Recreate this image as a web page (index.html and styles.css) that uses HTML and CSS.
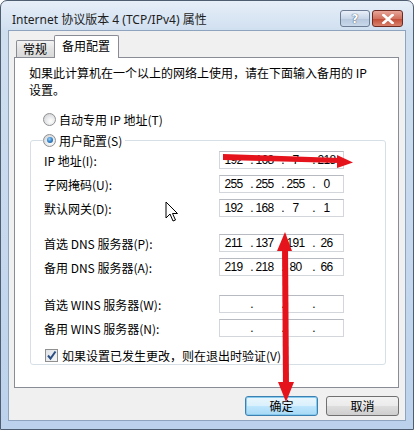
FILE: index.html
```html
<!DOCTYPE html>
<html lang="zh-CN">
<head>
    <meta charset="UTF-8">
    <title>Internet 协议版本 4 (TCP/IPv4) 属性</title>
    <link rel="stylesheet" href="styles.css">
</head>
<body>
    <div class="window">
        <div class="titlebar">
            <span class="title">Internet 协议版本 4 (TCP/IPv4) 属性</span>
            <div class="caption-btns">
                <span class="cap-btn help">?</span>
                <span class="cap-btn close">
                    <svg width="12" height="10" viewBox="0 0 12 10"><path d="M1.5 1 L10.5 9 M10.5 1 L1.5 9" stroke="#fff" stroke-width="2.6" stroke-linecap="square"/></svg>
                </span>
            </div>
        </div>

        <div class="client">
            <div class="tabs">
                <span class="tab">常规</span>
                <span class="tab active">备用配置</span>
            </div>
            <div class="panel">
                <p class="intro">如果此计算机在一个以上的网络上使用，请在下面输入备用的 IP<br>设置。</p>
                <div class="radio-row auto">
                    <span class="radio"></span>自动专用 IP 地址(T)
                </div>
                <fieldset class="group">
                    <legend class="radio-row">
                        <span class="radio checked"></span>用户配置(S)
                    </legend>

                    <div class="rows">
                        <div class="row">
                            <span class="lbl">IP 地址(I):</span>
                            <div class="ipbox"><span class="n">192</span><span class="d">.</span><span class="n">168</span><span class="d">.</span><span class="n">7</span><span class="d">.</span><span class="n">218</span></div>
                        </div>
                        <div class="row">
                            <span class="lbl">子网掩码(U):</span>
                            <div class="ipbox"><span class="n">255</span><span class="d">.</span><span class="n">255</span><span class="d">.</span><span class="n">255</span><span class="d">.</span><span class="n">0</span></div>
                        </div>
                        <div class="row">
                            <span class="lbl">默认网关(D):</span>
                            <div class="ipbox"><span class="n">192</span><span class="d">.</span><span class="n">168</span><span class="d">.</span><span class="n">7</span><span class="d">.</span><span class="n">1</span></div>
                        </div>
                    </div>

                    <div class="rows">
                        <div class="row">
                            <span class="lbl">首选 DNS 服务器(P):</span>
                            <div class="ipbox"><span class="n">211</span><span class="d">.</span><span class="n">137</span><span class="d">.</span><span class="n">191</span><span class="d">.</span><span class="n">26</span></div>
                        </div>
                        <div class="row">
                            <span class="lbl">备用 DNS 服务器(A):</span>
                            <div class="ipbox"><span class="n">219</span><span class="d">.</span><span class="n">218</span><span class="d">.</span><span class="n">80</span><span class="d">.</span><span class="n">66</span></div>
                        </div>
                    </div>

                    <div class="rows">
                        <div class="row">
                            <span class="lbl">首选 WINS 服务器(W):</span>
                            <div class="ipbox"><span class="n"></span><span class="d">.</span><span class="n"></span><span class="d">.</span><span class="n"></span><span class="d">.</span><span class="n"></span></div>
                        </div>
                        <div class="row">
                            <span class="lbl">备用 WINS 服务器(N):</span>
                            <div class="ipbox"><span class="n"></span><span class="d">.</span><span class="n"></span><span class="d">.</span><span class="n"></span><span class="d">.</span><span class="n"></span></div>
                        </div>
                    </div>

                    <div class="check-row">
                        <span class="checkbox">
                            <svg width="11" height="11" viewBox="0 0 11 11"><path d="M2 5.5 L4.5 8.5 L9.5 1.5" fill="none" stroke="#2b4f84" stroke-width="2"/></svg>
                        </span>如果设置已发生更改，则在退出时验证(V)
                    </div>
                </fieldset>
            </div>

            <div class="actions">
                <button class="btn default">确定</button>
                <button class="btn">取消</button>
            </div>
        </div>

        <!-- annotations drawn over the screenshot -->
        <svg class="marks" width="414" height="430" viewBox="0 0 414 430">
            <polygon points="223,154 340,158 340,163 223,160" fill="#e5131b"/>
            <polygon points="337,155 353,162.5 337,168" fill="#e5131b"/>
            <polygon points="282,246 288,246 289,386 283,386" fill="#e5131b"/>
            <polygon points="277,251 285,232 292,251" fill="#e5131b"/>
            <polygon points="278,382 286,402 294,382" fill="#e5131b"/>
        </svg>
        <svg class="cursor" width="14" height="22" viewBox="0 0 14 22">
            <path d="M1 1 L1 17 L5 13 L8 20 L10.5 19 L7.5 12.5 L12.5 12.5 Z" fill="#fff" stroke="#000" stroke-width="1" stroke-linejoin="round"/>
        </svg>
    </div>
</body>
</html>
```

FILE: styles.css
```css
body {
    margin: 0;
    font-family: "Noto Sans CJK SC", sans-serif;
    font-size: 12px;
    color: #000;
    background: #fff;
}
.window {
    position: relative;
    width: 414px;
    height: 430px;
    box-sizing: border-box;
    border: 1px solid #4f5d70;
    border-radius: 7px 7px 0 0;
    padding: 0 7px 8px 7px;
    background: linear-gradient(#e6eef8 0, #d0dff0 30px, #bcd2ec 100%);
}
.titlebar {
    height: 29px;
    display: flex;
    justify-content: space-between;
    align-items: flex-start;
}
.title {
    font-family: "Noto Sans", "Noto Sans CJK SC", sans-serif;
    font-size: 12px;
    line-height: 17px;
    margin: 10px 0 0 4px;
    color: #1e1e1e;
}
.caption-btns {
    display: flex;
    gap: 2px;
    margin: 9px 3px 0 0;
}
.cap-btn {
    width: 28px;
    height: 15px;
    border: 1px solid #6d7c92;
    border-radius: 3px;
    display: flex;
    align-items: center;
    justify-content: center;
}
.help {
    background: linear-gradient(#e9f0f8, #c8d6e8 50%, #b6c7dd 51%, #c9d8ea);
    color: #fff;
    font-family: "DejaVu Sans", sans-serif;
    font-weight: bold;
    font-size: 12px;
    text-shadow: 0 0 1px #40506a, 0 0 1px #40506a;
}
.close {
    width: 29px;
    border-color: #6b2a22;
    background: linear-gradient(#e8a699, #d2725f 50%, #c04a34 51%, #d9826e);
}
.client {
    height: 391px;
    box-sizing: border-box;
    border: 1px solid #8ea3bd;
    background: #f0f0f0;
    padding: 5px 6px 0 5px;
}
.tabs {
    display: flex;
    align-items: flex-end;
    height: 21px;
    padding-left: 2px;
    position: relative;
    z-index: 1;
}
.tab {
    height: 16px;
    line-height: 16px;
    padding: 0 7px 0 6px;
    border: 1px solid #898c95;
    border-bottom: none;
    border-radius: 2px 2px 0 0;
    background: linear-gradient(#f3f3f3, #e2e2e2 50%, #d9d9d9);
    font-size: 12px;
}
.tab.active {
    height: 22px;
    line-height: 20px;
    margin-left: -1px;
    margin-bottom: -1px;
    padding: 0 8px 0 7px;
    background: #fff;
}
.panel {
    height: 331px;
    box-sizing: border-box;
    border: 1px solid #898c95;
    background: #fff;
    padding: 6px 11px 0 14px;
}
.intro {
    margin: 0;
    line-height: 17px;
}
.radio-row {
    display: flex;
    align-items: center;
    height: 16px;
    white-space: nowrap;
}
.radio-row.auto {
    margin: 13px 0 5px 14px;
}
.radio {
    width: 11px;
    height: 11px;
    border: 1px solid #8f9092;
    border-radius: 50%;
    margin-right: 3px;
    background: radial-gradient(circle at 60% 65%, #ffffff 0, #e8e9ea 45%, #c9cbcd 100%);
    position: relative;
}
.radio.checked::after {
    content: "";
    position: absolute;
    left: 2.5px;
    top: 2.5px;
    width: 6px;
    height: 6px;
    border-radius: 50%;
    background: radial-gradient(circle at 40% 35%, #9fd2f6 0, #3a8ad0 45%, #1a4a7a 100%);
}
.group {
    margin: 0 0 0 1px;
    padding: 3px 0 2px 13px;
    border: 1px solid #d5dfe5;
    border-radius: 3px;
    width: 356px;
    box-sizing: border-box;
}
.group legend {
    padding: 0 3px 0 0;
    margin-left: -1px;
}
.rows {
    display: flex;
    flex-direction: column;
    gap: 6px;
    margin-bottom: 17px;
}
.rows:nth-of-type(2) {
    margin-bottom: 19px;
}
.rows:nth-of-type(3) {
    margin-bottom: 11px;
}
.row {
    display: flex;
    align-items: center;
    height: 18px;
}
.lbl {
    width: 175px;
    white-space: nowrap;
}
.ipbox {
    width: 125px;
    height: 18px;
    box-sizing: border-box;
    border: 1px solid #d3d6db;
    border-top-color: #b7bac0;
    padding-left: 2px;
    display: flex;
    font-family: "Liberation Sans", sans-serif;
    font-size: 12px;
    line-height: 16px;
    letter-spacing: -0.6px;
}
.ipbox .n {
    width: 23px;
    text-align: center;
}
.ipbox .d {
    width: 8px;
    text-align: right;
}
.check-row {
    display: flex;
    align-items: center;
    height: 14px;
    margin-left: 1px;
    white-space: nowrap;
}
.checkbox {
    width: 11px;
    height: 11px;
    border: 1px solid #8f8f8f;
    margin-right: 4px;
    background: linear-gradient(135deg, #dfe3e8, #f4f5f6);
    display: flex;
    align-items: center;
    justify-content: center;
}
.actions {
    display: flex;
    justify-content: flex-end;
    gap: 8px;
    margin-top: 8px;
}
.btn {
    width: 73px;
    height: 20px;
    padding: 0;
    border: 1px solid #707070;
    border-radius: 3px;
    font-family: "Noto Sans CJK SC", sans-serif;
    font-size: 12px;
    line-height: 16px;
    color: #000;
    background: linear-gradient(#f2f2f2, #ebebeb 50%, #dddddd 51%, #cfcfcf);
}
.btn.default {
    border-color: #3c7fb1;
    background: linear-gradient(#eaf6fd, #d9f0fc 50%, #bee6fd 51%, #a7d9f5);
    box-shadow: inset 0 0 0 1px #86cbee;
}
.marks {
    position: absolute;
    left: -1px;
    top: -1px;
    pointer-events: none;
}
.cursor {
    position: absolute;
    left: 164px;
    top: 200px;
    pointer-events: none;
}
```
